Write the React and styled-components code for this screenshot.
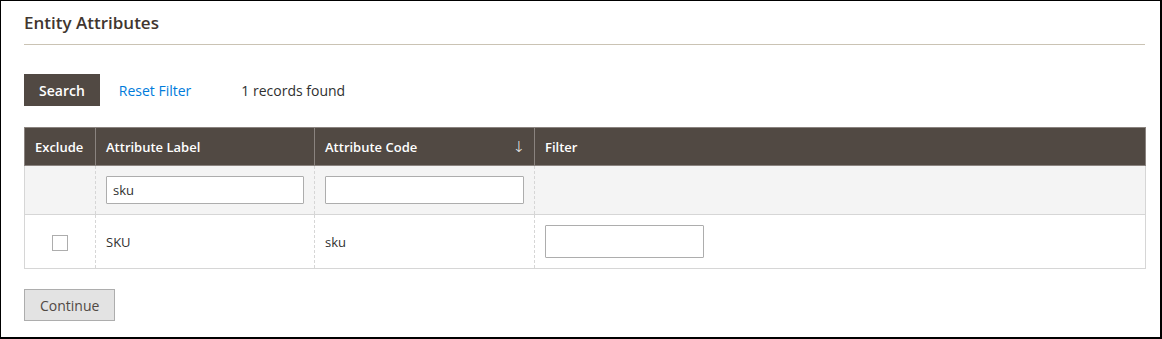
import React from "react";
import styled, { createGlobalStyle } from "styled-components";

const Global = createGlobalStyle`
  html, body { margin: 0; padding: 0; background: #fff; }
  body { font-family: "Open Sans", "Liberation Sans", sans-serif; color: #303030; }
  * { box-sizing: border-box; }
`;

const Frame = styled.div`
  width: 1162px;
  height: 339px;
  border: 1px solid #000;
  border-right-width: 2px;
  border-bottom-width: 2px;
  padding: 0 15px 0 23px;
  background: #fff;
`;

const Title = styled.h2`
  margin: 0;
  padding: 11px 0 10px;
  font-size: 17px;
  line-height: 22px;
  font-weight: 600;
  color: #41362f;
  border-bottom: 1px solid #cac3b4;
`;

const Toolbar = styled.div`
  display: flex;
  align-items: center;
  margin-top: 29px;
  height: 32px;
`;

const Button = styled.button`
  height: 32px;
  padding: 0 ${(p) => p.$px || 15}px;
  font-family: "Open Sans", "Liberation Sans", sans-serif;
  font-size: 14px;
  font-weight: ${(p) => (p.$primary ? 600 : 400)};
  color: ${(p) => (p.$primary ? "#fff" : "#514943")};
  background: ${(p) => (p.$primary ? "#514943" : "#e3e3e3")};
  border: 1px solid ${(p) => (p.$primary ? "#514943" : "#adadad")};
  cursor: pointer;
`;

const LinkButton = styled.a`
  margin-left: 19px;
  font-size: 14px;
  color: #007bdb;
  text-decoration: none;
`;

const Count = styled.span`
  margin-left: 50px;
  font-size: 14px;
  color: #303030;
`;

const Grid = styled.table`
  margin-top: 21px;
  width: 1122px;
  border-collapse: collapse;
  table-layout: fixed;
  font-size: 13px;
`;

const HeadCell = styled.th`
  height: 38px;
  padding: 0 10px;
  text-align: left;
  font-size: 13px;
  font-weight: 600;
  color: #fff;
  background: #514943;
  border: 1px solid #8a837f;
  position: relative;
`;

const SortArrow = styled.span`
  position: absolute;
  right: 9px;
  top: 50%;
  transform: translateY(-50%);
  font-family: "DejaVu Sans", sans-serif;
  font-weight: 300;
  font-size: 15px;
  color: #f0f0f0;
`;

const FilterCell = styled.td`
  height: 49px;
  padding: 0 10px;
  background: #f4f4f4;
  border-left: 1px dashed #d6d6d6;
  border-bottom: 1px solid #d6d6d6;
  &:first-child { border-left: 1px solid #d6d6d6; }
  &:last-child { border-right: 1px solid #d6d6d6; }
`;

const BodyCell = styled.td`
  height: 54px;
  padding: 0 10px;
  color: #303030;
  text-align: ${(p) => (p.$center ? "center" : "left")};
  border-left: 1px dashed #d6d6d6;
  border-bottom: 1px solid #d6d6d6;
  &:first-child { border-left: 1px solid #d6d6d6; }
  &:last-child { border-right: 1px solid #d6d6d6; }
`;

const TextInput = styled.input`
  display: block;
  width: ${(p) => (p.$w ? `${p.$w}px` : "100%")};
  height: ${(p) => p.$h || 28}px;
  padding: 0 6px;
  font-family: "Open Sans", "Liberation Sans", sans-serif;
  font-size: 13px;
  color: #303030;
  background: #fff;
  border: 1px solid #adadad;
  border-radius: 1px;
  outline: none;
`;

const Check = styled.span`
  display: inline-block;
  width: 16px;
  height: 16px;
  border: 1px solid #adadad;
  background: #fff;
  vertical-align: middle;
`;

const Footer = styled.div`
  margin-top: 20px;
`;

export default function App() {
  return (
    <>
      <Global />
      <Frame>
        <Title>Entity Attributes</Title>
        <Toolbar>
          <Button $primary $px={14}>Search</Button>
          <LinkButton href="#">Reset Filter</LinkButton>
          <Count>1 records found</Count>
        </Toolbar>
        <Grid>
          <colgroup>
            <col style={{ width: 71 }} />
            <col style={{ width: 219 }} />
            <col style={{ width: 220 }} />
            <col />
          </colgroup>
          <thead>
            <tr>
              <HeadCell>Exclude</HeadCell>
              <HeadCell>Attribute Label</HeadCell>
              <HeadCell>
                Attribute Code<SortArrow>↓</SortArrow>
              </HeadCell>
              <HeadCell>Filter</HeadCell>
            </tr>
          </thead>
          <tbody>
            <tr>
              <FilterCell />
              <FilterCell>
                <TextInput defaultValue="sku" />
              </FilterCell>
              <FilterCell>
                <TextInput defaultValue="" />
              </FilterCell>
              <FilterCell />
            </tr>
            <tr>
              <BodyCell $center>
                <Check />
              </BodyCell>
              <BodyCell>SKU</BodyCell>
              <BodyCell>sku</BodyCell>
              <BodyCell>
                <TextInput $w={159} $h={33} defaultValue="" />
              </BodyCell>
            </tr>
          </tbody>
        </Grid>
        <Footer>
          <Button $px={15}>Continue</Button>
        </Footer>
      </Frame>
    </>
  );
}
